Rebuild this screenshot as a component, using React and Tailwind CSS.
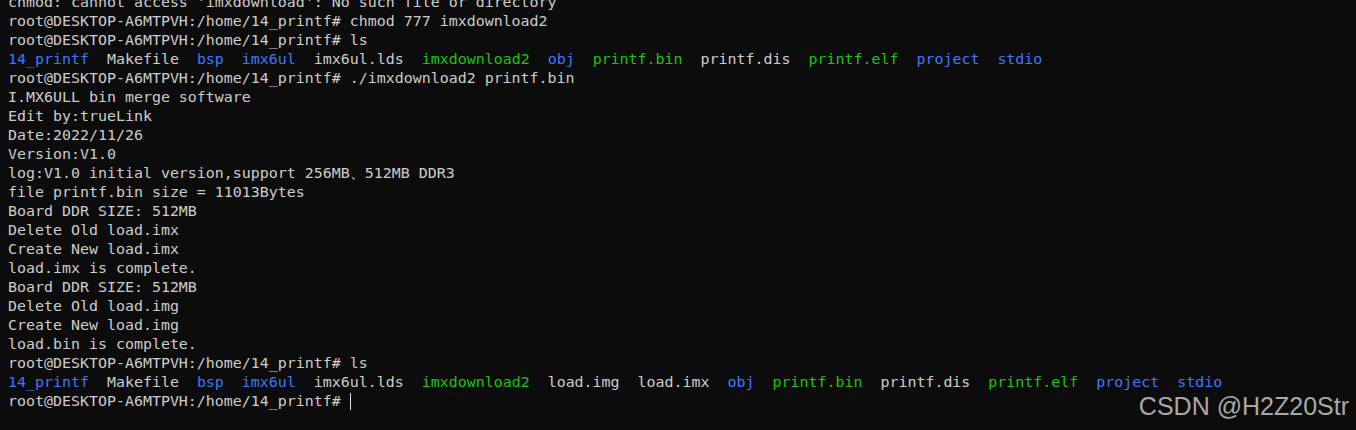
import React from 'react';

const PROMPT = 'root@DESKTOP-A6MTPVH:/home/14_printf# ';

const B = ({ children }) => <span className="text-[#3b78ff]">{children}</span>;
const G = ({ children }) => <span className="text-[#16c60c]">{children}</span>;

const lines = [
  "chmod: cannot access 'imxdownload': No such file or directory",
  PROMPT + 'chmod 777 imxdownload2',
  PROMPT + 'ls',
  <>
    <B>14_printf</B>{'  Makefile  '}<B>bsp</B>{'  '}<B>imx6ul</B>{'  imx6ul.lds  '}<G>imxdownload2</G>{'  '}
    <B>obj</B>{'  '}<G>printf.bin</G>{'  printf.dis  '}<G>printf.elf</G>{'  '}<B>project</B>{'  '}<B>stdio</B>
  </>,
  PROMPT + './imxdownload2 printf.bin',
  'I.MX6ULL bin merge software',
  'Edit by:trueLink',
  'Date:2022/11/26',
  'Version:V1.0',
  'log:V1.0 initial version,support 256MB、512MB DDR3',
  'file printf.bin size = 11013Bytes',
  'Board DDR SIZE: 512MB',
  'Delete Old load.imx',
  'Create New load.imx',
  'load.imx is complete.',
  'Board DDR SIZE: 512MB',
  'Delete Old load.img',
  'Create New load.img',
  'load.bin is complete.',
  PROMPT + 'ls',
  <>
    <B>14_printf</B>{'  Makefile  '}<B>bsp</B>{'  '}<B>imx6ul</B>{'  imx6ul.lds  '}<G>imxdownload2</G>
    {'  load.img  load.imx  '}<B>obj</B>{'  '}<G>printf.bin</G>{'  printf.dis  '}<G>printf.elf</G>{'  '}
    <B>project</B>{'  '}<B>stdio</B>
  </>,
  <>
    {PROMPT}
    <span className="inline-block w-px h-[17px] bg-[#e0e0e0] align-[-4px]" />
  </>,
];

export default function App() {
  return (
    <div className="relative w-[1356px] h-[430px] overflow-hidden bg-[#0c0c0c]">
      <div className="-mt-[7px] pl-2 text-[14.95px] leading-[19px] text-[#cccccc] whitespace-pre font-['DejaVu_Sans_Mono','Liberation_Mono',monospace]">
        {lines.map((l, i) => (
          <div key={i} className="h-[19px]">{l}</div>
        ))}
      </div>
      <div className="absolute right-[7px] bottom-[11px] text-[25px] leading-none text-[#a8a8a8] font-['Liberation_Sans',Arial,sans-serif]">
        CSDN @H2Z20Str
      </div>
    </div>
  );
}
